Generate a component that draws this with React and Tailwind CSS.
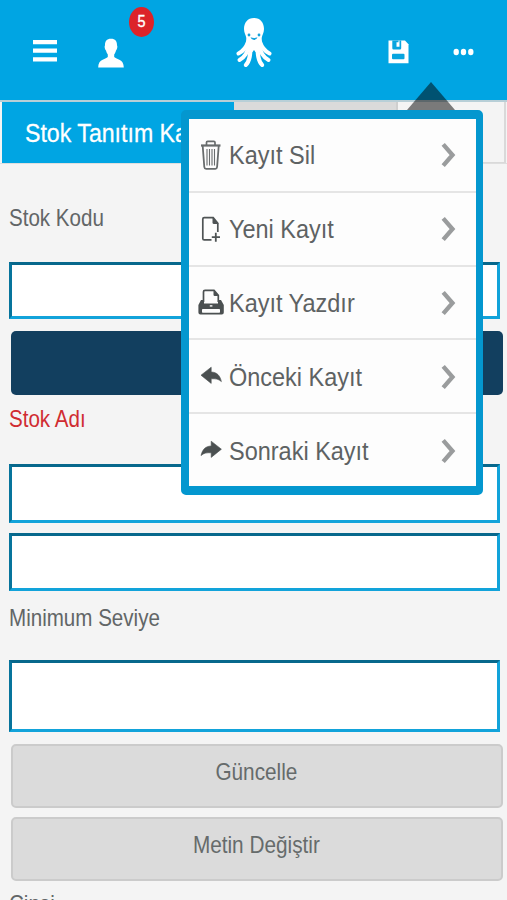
import React from "react";

const fieldBorder =
  "shrink-0 ml-[9px] w-[491px] bg-white border-[3px] border-t-[#07688c] border-l-[#07749c] border-r-[#12a3da] border-b-[#12a3da]";

function Label({ children, className = "" }) {
  return (
    <div className={`shrink-0 pl-[9px] h-7 leading-7 text-2xl whitespace-nowrap ${className}`}>
      <span className="inline-block origin-left scale-x-[0.857]">{children}</span>
    </div>
  );
}

function GreyButton({ children, className = "" }) {
  return (
    <button
      className={`shrink-0 ml-[10.5px] w-[492px] h-16 rounded-[5px] border-2 border-[#cbcbcb] bg-[#dbdbdb] text-2xl text-[#666b6b] flex items-center justify-center pb-[9px] ${className}`}
    >
      <span className="inline-block scale-x-[0.865] whitespace-nowrap">{children}</span>
    </button>
  );
}

function Trash() {
  return (
    <svg width="26" height="32" viewBox="0 0 26 32" fill="none" stroke="#686c6d">
      <path d="M3 6.5H22.500" strokeWidth="2.2" />
      <path d="M8.500 6V3.600Q8.500 2.400 9.700 2.400H15.800Q17 2.400 17 3.600V6" strokeWidth="1.700" />
      <path d="M4.700 7L6.300 28Q6.500 29.800 8.100 29.800H17.300Q18.900 29.800 19.100 28L20.700 7" strokeWidth="1.800" />
      <path d="M9 10V26.500M11.500 10V26.500M14 10V26.500M16.500 10V26.500" strokeWidth="1.100" />
    </svg>
  );
}

function NewPage() {
  return (
    <svg width="26" height="32" viewBox="0 0 26 32" fill="none" stroke="#4f5455">
      <path d="M13.500 26.800H6.200Q4.800 26.800 4.800 25.400V6.100Q4.800 4.700 6.200 4.700H15.200L19.800 10.200V19" strokeWidth="1.700" />
      <path d="M14.500 4L20.600 11H16Q14.500 11 14.500 9.500Z" fill="#4f5455" stroke="none" />
      <path d="M17.800 19.800V28.800M13.800 24.200H22" strokeWidth="1.800" />
    </svg>
  );
}

function Printer() {
  return (
    <svg width="26" height="32" viewBox="0 0 26 32">
      <path d="M5.500 16V5.800Q5.500 4.300 7 4.300H16L20.300 9.300V16" fill="none" stroke="#4b5051" strokeWidth="1.700" />
      <path d="M15.500 4L20.600 10H16.700Q15.500 10 15.500 8.800Z" fill="#4b5051" />
      <path d="M3 14H6V17.500H20V14H23L25.800 19V26.500Q25.800 28.600 23.800 28.600H2.400Q.4 28.600 .4 26.500V19Z" fill="#4b5051" />
      <rect x="4" y="23" width="18" height="3.800" rx=".7" fill="#fdfdfd" />
      <path d="M11.800 19.200H14.400V20.600H11.800Z" fill="#fdfdfd" />
    </svg>
  );
}

function Previous() {
  return (
    <svg width="26" height="32" viewBox="0 0 26 32">
      <path d="M3 15.200L13.200 7.200V12C19 12.200 22 15.500 23.400 21.600C20.500 18.900 17.500 18.600 13.200 18.800V23.400Z" fill="#4b5051" stroke="#4b5051" strokeWidth=".6" strokeLinejoin="round" />
    </svg>
  );
}

function Next() {
  return (
    <svg width="26" height="32" viewBox="0 0 26 32">
      <path d="M23.400 15.200L13.200 7.200V12C7.400 12.200 4.400 15.500 3 21.600C5.900 18.900 8.900 18.600 13.200 18.800V23.400Z" fill="#4b5051" stroke="#4b5051" strokeWidth=".6" strokeLinejoin="round" />
    </svg>
  );
}

const items = [
  { label: "Kayıt Sil", Icon: Trash },
  { label: "Yeni Kayıt", Icon: NewPage },
  { label: "Kayıt Yazdır", Icon: Printer },
  { label: "Önceki Kayıt", Icon: Previous },
  { label: "Sonraki Kayıt", Icon: Next },
];

function Menu() {
  return (
    <div className="absolute left-[181px] top-[82px] w-[302px]">
      <svg className="block ml-[226px]" width="48" height="28" viewBox="0 0 48 28">
        <path d="M24 0L48 28H0Z" fill="#000" fillOpacity=".5" />
      </svg>
      <div className="h-[385px] rounded-[5px] border-8 border-t-[9.5px] border-b-[9px] border-r-[7px] border-[#0497cf] bg-[#fdfdfd] flex flex-col">
        {items.map(({ label, Icon }, i) => (
          <div
            key={label}
            className={`flex-1 flex items-center pl-[9px] pr-5 ${i < 4 ? "border-b-2 border-[#e5e5e5]" : ""}`}
          >
            <Icon />
            <span className="ml-[4.5px] pt-px flex-1 whitespace-nowrap text-[26px] leading-8 text-[#5e6263]">
              <span className="inline-block origin-left scale-x-[0.903]">{label}</span>
            </span>
            <svg className="mt-px" width="15" height="26" viewBox="0 0 15 26" fill="none" stroke="#9a9c9d" strokeWidth="4.300">
              <path d="M2.200 2.300L11.500 13L2.200 23.700" />
            </svg>
          </div>
        ))}
      </div>
    </div>
  );
}

function Octopus() {
  return (
    <svg className="ml-[83px] mt-[17px]" width="36" height="52" viewBox="0 0 36 52">
      <path
        d="M18 1C11.500 1 8 5.800 8 12C8 16 10 18.500 10.300 21L10 27H26L25.700 21C26 18.500 28 16 28 12C28 5.800 24.500 1 18 1Z"
        fill="#fff"
      />
      <g fill="none" stroke="#fff" strokeWidth="4" strokeLinecap="round" strokeLinejoin="round">
        <path d="M12 25C10 31 7.500 34 2.500 36.500" />
        <path d="M13 27C12 35 9 40 3.500 43" />
        <path d="M14.800 27C14.500 37 14 44 9.800 48" />
        <path d="M24 25C26 31 28.500 34 33.500 36.500" />
        <path d="M23 27C24 35 27 40 32.500 43" />
        <path d="M21.200 27C21.500 37 22 44 26.200 48" />
      </g>
      <path d="M11 23H25L22.500 35H19.500L18 33L16.500 35H13.500Z" fill="#fff" />
      <circle cx="13" cy="18" r="1.400" fill="#16a3dd" />
      <circle cx="23" cy="18" r="1.400" fill="#16a3dd" />
      <path d="M14.500 20.300Q18 21.600 21.500 20.300Q20.700 23 18 23Q15.300 23 14.500 20.300Z" fill="#16a3dd" />
    </svg>
  );
}

export default function App() {
  return (
    <div
      className="relative w-[507px] h-[900px] overflow-hidden bg-[#f4f4f4] flex flex-col text-[#626667]"
      style={{ fontFamily: '"Liberation Sans", Arial, sans-serif' }}
    >
      <header className="shrink-0 h-[100px] bg-[#00a5e3] flex items-start">
        <svg className="ml-[33px] mt-[39px]" width="24" height="24" viewBox="0 0 24 24" fill="#fff">
          <path d="M0 1H24V5.200H0ZM0 9.600H24V13.800H0ZM0 18.300H24V22.500H0Z" />
        </svg>
        <div className="relative ml-[41px] mt-[38px]">
          <svg width="26" height="30" viewBox="0 0 26 30" fill="#fff">
            <path d="M13 .8C8.700 .8 6.800 3.500 7 7.500C6.300 8 6.700 11.500 8 12.500C8.400 14.500 9.300 15.800 9.800 16.400V19C7.500 21.500 .2 20.800 .2 29.500H25.800C25.800 20.800 18.500 21.500 16.200 19V16.400C16.900 15.600 17.600 14.300 18 12.500C19.300 11.500 19.700 8 19 7.500C19.200 3.500 17.300 .8 13 .8Z" />
          </svg>
          <span className="absolute left-[31px] top-[-31px] w-[25px] h-[30px] rounded-[50%] bg-[#dc2329] text-white text-base leading-[29px] text-center">
            <span className="inline-block scale-x-90 [-webkit-text-stroke:0.4px_white]">5</span>
          </span>
        </div>
        <div className="ml-[29px]">
          <Octopus />
        </div>
        <svg className="ml-[116px] mt-[40px]" width="21" height="24" viewBox="0 0 21 24">
          <path d="M1 .5H17L20.500 4.200V23.300H.5V.5Z" fill="#fff" />
          <path d="M4.300 .5V8.200Q4.300 9.400 5.500 9.400H12Q13.200 9.400 13.200 8.200V.5H11.500V6.700H8.500V2.200H10.500V.5Z" fill="#08a5df" />
          <rect x="4" y="13.800" width="12.500" height="5.500" rx="1" fill="#08a5df" />
        </svg>
        <svg className="ml-[44px] mt-[48px]" width="21" height="8" viewBox="0 0 21 8" fill="#fff">
          <ellipse cx="3.200" cy="4" rx="2.700" ry="3.200" />
          <ellipse cx="10.500" cy="4" rx="2.700" ry="3.200" />
          <ellipse cx="17.800" cy="4" rx="2.700" ry="3.200" />
        </svg>
      </header>

      <nav className="shrink-0 h-[64px] border-t-2 border-t-[#b8cfd7] border-b border-b-[#dedede] flex pl-[2px]">
        <div className="w-[232px] h-[61px] bg-[#00a5e3] text-white text-[26px] leading-[62px] pl-[22.500px] whitespace-nowrap overflow-hidden">
          <span className="inline-block origin-left scale-x-[0.89] [-webkit-text-stroke:0.3px_white]">Stok Tanıtım Kartı</span>
        </div>
        <div className="w-[164px] bg-[#dadada] border-r-2 border-[#cfcfcf]" />
        <div className="w-[108px] bg-[#f4f4f4] border-r-2 border-b border-[#d9d9d9]" />
      </nav>

      <Label className="mt-[40px]">Stok Kodu</Label>
      <div className={`${fieldBorder} mt-[30px] h-[57px]`} />
      <div className="shrink-0 ml-[11px] mt-3 w-[492px] h-16 rounded-[5px] bg-[#123f5f]" />
      <Label className="mt-[10px] text-[#d02c31]">Stok Adı</Label>
      <div className={`${fieldBorder} mt-[31px] h-[59px]`} />
      <div className={`${fieldBorder} mt-[10px] h-[58px]`} />
      <Label className="mt-[13px]">Minimum Seviye</Label>
      <div className={`${fieldBorder} mt-[28px] h-[72px]`} />
      <GreyButton className="mt-3">Güncelle</GreyButton>
      <GreyButton className="mt-[9px]">Metin Değiştir</GreyButton>
      <Label className="mt-[9px]">Cinsi</Label>

      <Menu />
    </div>
  );
}
